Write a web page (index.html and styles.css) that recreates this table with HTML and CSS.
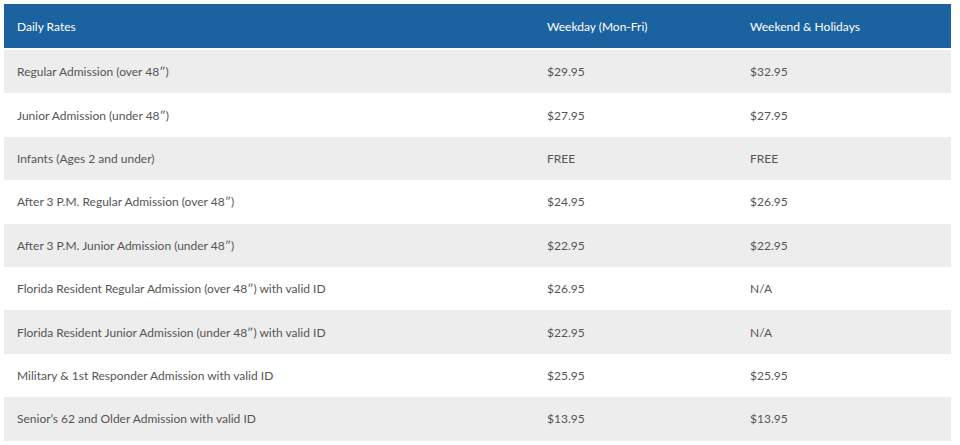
FILE: index.html
```html
<!DOCTYPE html>
<html>
<head>
<meta charset="utf-8">
<link rel="stylesheet" href="styles.css">
</head>
<body>
<table class="rates">
  <colgroup>
    <col class="c1"><col class="c2"><col class="c3">
  </colgroup>
  <thead>
    <tr><th>Daily Rates</th><th>Weekday (Mon-Fri)</th><th>Weekend &amp; Holidays</th></tr>
  </thead>
  <tbody>
    <tr><td>Regular Admission (over 48″)</td><td>$29.95</td><td>$32.95</td></tr>
    <tr><td>Junior Admission (under 48″)</td><td>$27.95</td><td>$27.95</td></tr>
    <tr><td>Infants (Ages 2 and under)</td><td>FREE</td><td>FREE</td></tr>
    <tr><td>After 3 P.M. Regular Admission (over 48″)</td><td>$24.95</td><td>$26.95</td></tr>
    <tr><td>After 3 P.M. Junior Admission (under 48″)</td><td>$22.95</td><td>$22.95</td></tr>
    <tr><td>Florida Resident Regular Admission (over 48″) with valid ID</td><td>$26.95</td><td>N/A</td></tr>
    <tr><td>Florida Resident Junior Admission (under 48″) with valid ID</td><td>$22.95</td><td>N/A</td></tr>
    <tr><td>Military &amp; 1st Responder Admission with valid ID</td><td>$25.95</td><td>$25.95</td></tr>
    <tr><td>Senior’s 62 and Older Admission with valid ID</td><td>$13.95</td><td>$13.95</td></tr>
  </tbody>
</table>
</body>
</html>
```
FILE: styles.css
```css
html, body {
  margin: 0;
  padding: 0;
  background: #ffffff;
}
body {
  padding: 4px 9px 0 4px;
  font-family: Lato, "Open Sans", sans-serif;
}
.rates {
  width: 947px;
  border-collapse: collapse;
  table-layout: fixed;
  font-size: 12px;
  color: #555555;
}
.c1 { width: 530px; }
.c2 { width: 203px; }
.c3 { width: 214px; }
.rates th {
  background: #1b62a0;
  color: #ffffff;
  font-weight: normal;
  text-align: left;
  height: 44px;
  padding: 0 0 0 13px;
  border-bottom: 2px solid #ffffff;
}
.rates td {
  height: 43.4px;
  padding: 0 0 0 13px;
  text-align: left;
}
.rates tbody tr:nth-child(odd) td {
  background: #ededed;
}
```
